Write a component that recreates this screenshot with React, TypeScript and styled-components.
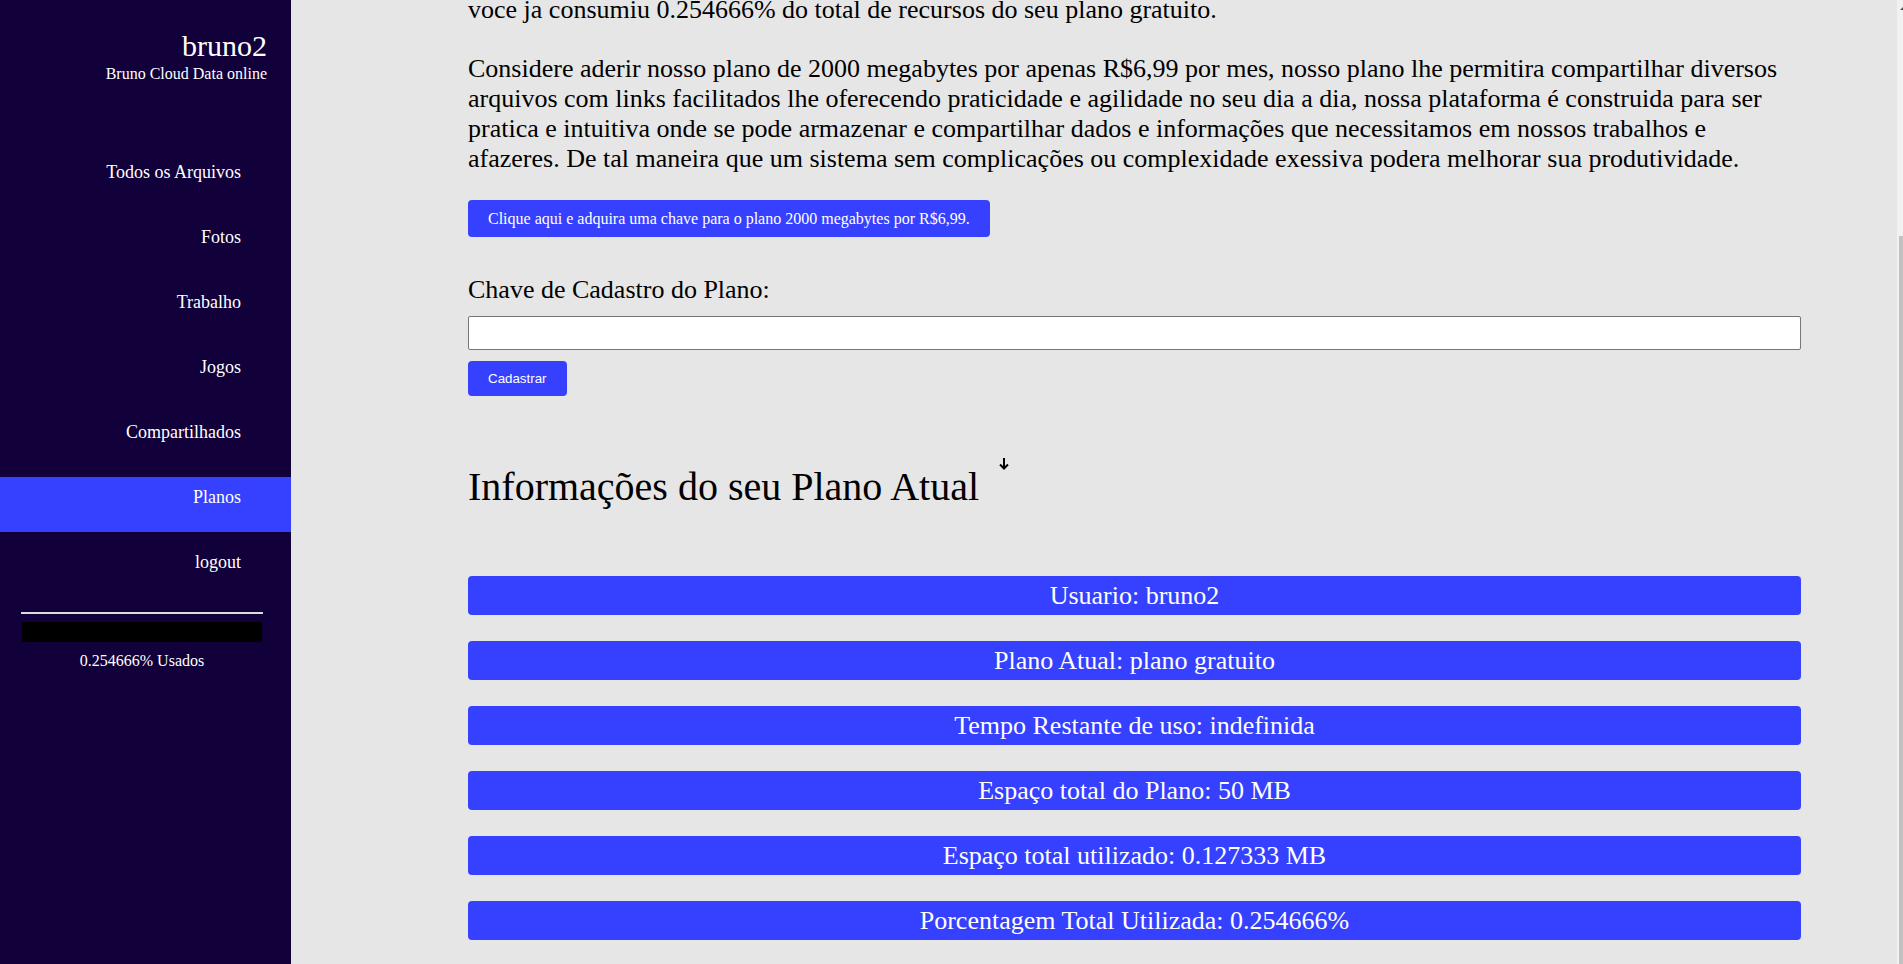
import { useLayoutEffect, useRef, useState } from 'react'
import styled, { createGlobalStyle } from 'styled-components'

const GlobalStyle = createGlobalStyle`
  html, body {
    margin: 0;
    padding: 0;
    height: 100%;
    overflow: hidden;
  }
  body {
    font-family: 'Liberation Serif', 'Times New Roman', serif;
  }
`

const Page = styled.div`
  display: flex;
  height: 100vh;
  background: #e6e6e6;
`

const Sidebar = styled.aside`
  width: 291px;
  flex-shrink: 0;
  background: #12003a;
  color: #fff;
  display: flex;
  flex-direction: column;
`

const Brand = styled.header`
  padding: 29px 24px 0 0;
  text-align: right;
`

const UserName = styled.div`
  font-size: 30px;
  line-height: 34px;
`

const Tagline = styled.div`
  font-size: 16px;
  line-height: 18px;
  margin-top: 2px;
`

const Nav = styled.nav`
  margin-top: 69px;
  display: flex;
  flex-direction: column;
  gap: 10px;
`

const NavItem = styled.a<{ $active?: boolean }>`
  display: block;
  height: 55px;
  box-sizing: border-box;
  padding: 10px 50px 0 0;
  text-align: right;
  font-size: 18px;
  line-height: 21px;
  color: #fff;
  text-decoration: none;
  cursor: pointer;
  background: ${(p) => (p.$active ? '#3641ff' : 'transparent')};
`

const Usage = styled.div`
  margin-top: 15px;
  padding: 0 28px 0 21px;
  display: flex;
  flex-direction: column;
  align-items: center;
`

const Divider = styled.hr`
  width: 100%;
  height: 2px;
  margin: 0;
  border: 0;
  background: #dcdcdc;
`

// barra de uso: com 0.25% o preenchimento nem aparece
const UsageBar = styled.div`
  align-self: stretch;
  height: 20px;
  margin: 8px 1px 0 1px;
  background: #000;
`

const UsageText = styled.div`
  margin-top: 10px;
  font-size: 16px;
  line-height: 18px;
`

const Main = styled.main`
  flex: 1;
  height: 100vh;
  overflow-y: scroll;
  scrollbar-width: none;
`

const ScrollRail = styled.div`
  width: 6px;
  flex-shrink: 0;
  display: flex;
  flex-direction: column;
  background: #f1f1f1;
`

const ScrollArrow = styled.div`
  align-self: flex-end;
  width: 0;
  height: 0;
  margin-top: 7px;
  border-left: 3px solid transparent;
  border-bottom: 3px solid #505050;
`

const ScrollThumb = styled.div`
  margin-left: 2px;
  background: #c1c1c1;
`

const Content = styled.div`
  width: 1333px;
  padding: 114px 0 24px 177px;
  color: #000;
`

const PageTitle = styled.h1`
  margin: 0 0 27px;
  font-size: 40px;
  font-weight: normal;
`

const Text = styled.p`
  margin: 0 0 29px;
  font-size: 26px;
`

const BuyButton = styled.button`
  display: block;
  height: 37px;
  margin-top: -3px;
  padding: 0 20px;
  border: 0;
  border-radius: 4px;
  background: #3641ff;
  color: #fff;
  font-family: 'Liberation Serif', serif;
  font-size: 16px;
  cursor: pointer;
`

const KeyLabel = styled.label`
  display: block;
  margin-top: 38px;
  font-size: 26px;
`

const KeyInput = styled.input`
  display: block;
  width: 100%;
  height: 34px;
  box-sizing: border-box;
  margin-top: 11px;
  border: 1px solid #767676;
  border-radius: 2px;
  background: #fff;
`

const SubmitButton = styled.button`
  display: block;
  height: 35px;
  margin-top: 11px;
  padding: 0 20px;
  border: 0;
  border-radius: 4px;
  background: #3641ff;
  color: #fff;
  font-family: 'Liberation Sans', Arial, sans-serif;
  font-size: 13.33px;
  cursor: pointer;
`

const SectionTitle = styled.h2`
  display: flex;
  align-items: flex-start;
  margin: 67px 0 0;
  font-size: 40px;
  font-weight: normal;
`

const ToggleArrow = styled.span`
  display: flex;
  margin: -5px 0 0 20px;
  cursor: pointer;
`

const InfoList = styled.div`
  display: flex;
  flex-direction: column;
  gap: 26px;
  margin-top: 66px;
`

const InfoRow = styled.div`
  height: 39px;
  line-height: 39px;
  border-radius: 4px;
  background: #3641ff;
  color: #fff;
  font-size: 26px;
  text-align: center;
`

const navLinks = ['Todos os Arquivos', 'Fotos', 'Trabalho', 'Jogos', 'Compartilhados', 'Planos', 'logout']

const usedPercent = 0.254666

const planInfo = [
  'Usuario: bruno2',
  'Plano Atual: plano gratuito',
  'Tempo Restante de uso: indefinida',
  'Espaço total do Plano: 50 MB',
  'Espaço total utilizado: 0.127333 MB',
  `Porcentagem Total Utilizada: ${usedPercent}%`,
]

export default function App() {
  const mainRef = useRef<HTMLElement>(null)
  const [thumb, setThumb] = useState({ top: 0, height: 0 })

  // a pagina aparece rolada ate o fim
  useLayoutEffect(() => {
    const el = mainRef.current
    if (!el) return
    el.scrollTop = el.scrollHeight
    const ratio = el.clientHeight / el.scrollHeight
    setThumb({ top: el.scrollTop * ratio, height: el.clientHeight * ratio })
  }, [])

  return (
    <>
      <GlobalStyle />
      <Page>
        <Sidebar>
          <Brand>
            <UserName>bruno2</UserName>
            <Tagline>Bruno Cloud Data online</Tagline>
          </Brand>
          <Nav>
            {navLinks.map((link) => (
              <NavItem key={link} $active={link === 'Planos'}>
                {link}
              </NavItem>
            ))}
          </Nav>
          <Usage>
            <Divider />
            <UsageBar />
            <UsageText>{usedPercent}% Usados</UsageText>
          </Usage>
        </Sidebar>

        <Main ref={mainRef}>
          <Content>
            <PageTitle>Planos</PageTitle>
            <Text>
              Ola bruno2, seja bem vindo a pagina de planos da Bruno Cloud Data online. Atualmente voce esta
              utilizando o plano gratuito, que disponibiliza 50 megabytes de espaço para armazenar seus arquivos,
              fotos, trabalhos, jogos e compartilhamentos. Todos os seus dados ficam guardados com segurança em
              nossos servidores e podem ser acessados a qualquer momento, bastando uma conexao com a internet, e ate
              o presente momento
              <br />
              voce ja consumiu {usedPercent}% do total de recursos do seu plano gratuito.
            </Text>
            <Text>
              Considere aderir nosso plano de 2000 megabytes por apenas R$6,99 por mes, nosso plano lhe permitira
              compartilhar diversos arquivos com links facilitados lhe oferecendo praticidade e agilidade no seu dia a
              dia, nossa plataforma é construida para ser pratica e intuitiva onde se pode armazenar e compartilhar
              dados e informações que necessitamos em nossos trabalhos e afazeres. De tal maneira que um sistema sem
              complicações ou complexidade exessiva podera melhorar sua produtividade.
            </Text>
            <BuyButton>Clique aqui e adquira uma chave para o plano 2000 megabytes por R$6,99.</BuyButton>

            <KeyLabel htmlFor="chave">Chave de Cadastro do Plano:</KeyLabel>
            <KeyInput id="chave" type="text" />
            <SubmitButton>Cadastrar</SubmitButton>

            <SectionTitle>
              Informações do seu Plano Atual
              <ToggleArrow>
                <svg width="10" height="12" viewBox="0 0 10 12" fill="none" stroke="#000" strokeWidth="2">
                  <path d="M5 0v10.5" />
                  <path d="M1 6.5l4 4 4-4" />
                </svg>
              </ToggleArrow>
            </SectionTitle>

            <InfoList>
              {planInfo.map((info) => (
                <InfoRow key={info}>{info}</InfoRow>
              ))}
            </InfoList>
          </Content>
        </Main>

        <ScrollRail>
          <ScrollArrow />
          <ScrollThumb style={{ marginTop: Math.max(thumb.top - 10, 0), height: thumb.height }} />
        </ScrollRail>
      </Page>
    </>
  )
}
